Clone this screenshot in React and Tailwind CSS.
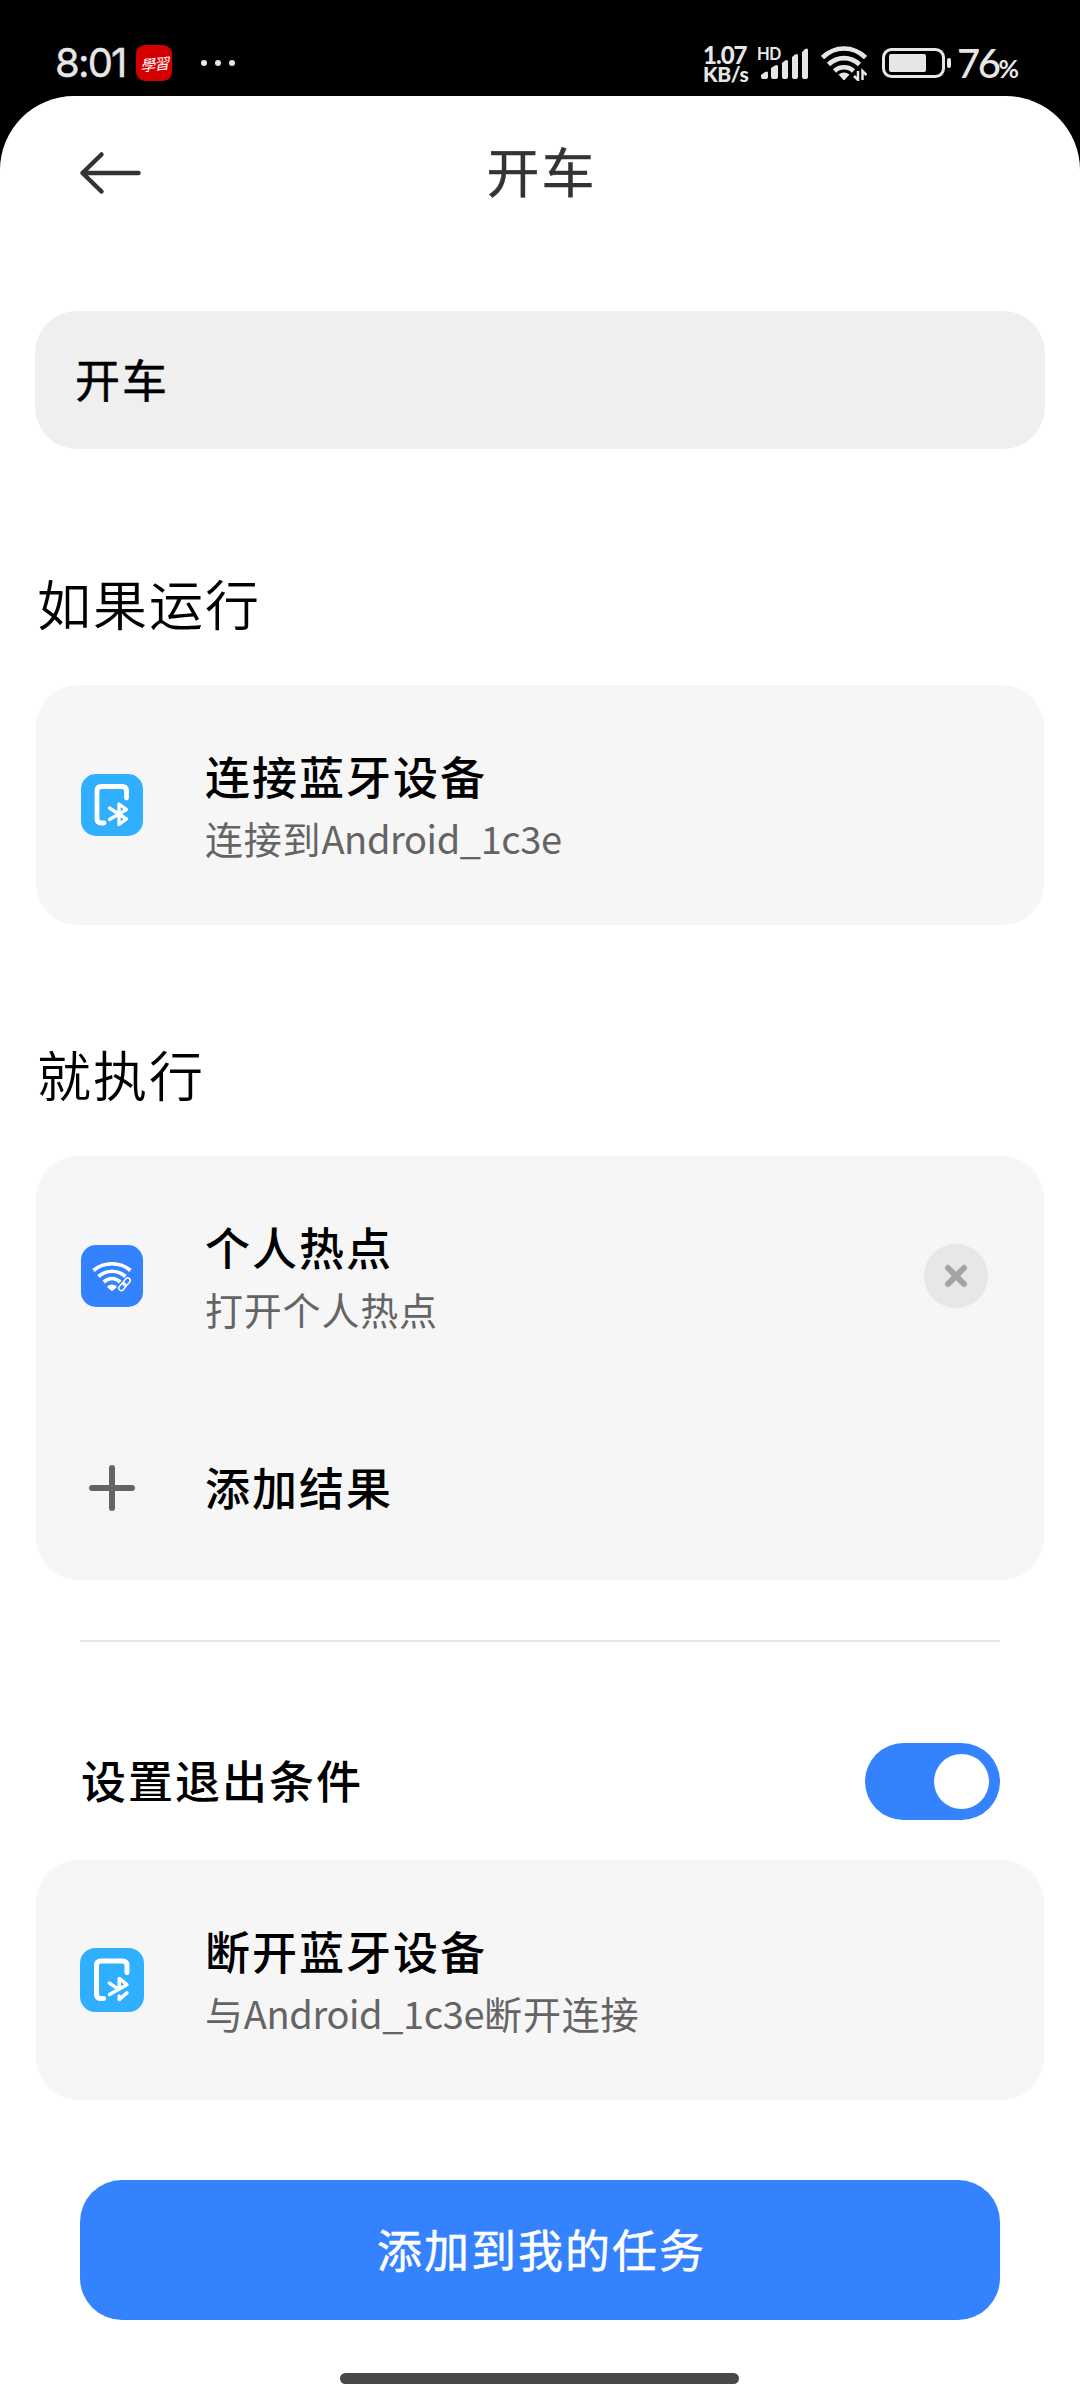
const CJK = "font-['Noto_Sans_CJK_SC',sans-serif]";

function StatusBar() {
  return (
    <header className="flex h-24 items-start bg-black text-[#e6e6e6]">
      <div className="ml-[55px] mt-[43px] flex h-10 w-[81px] items-center font-['Inter',sans-serif] text-[40px] leading-none tracking-[-1.800px] [-webkit-text-stroke:0.4px_#e6e6e6]">
        8:01
      </div>
      <div className="mt-[45px] flex size-9 items-center justify-center rounded-[9px] bg-[#d40000] text-white">
        <span className="-rotate-6 font-['Noto_Sans_CJK_TC',sans-serif] text-[15px] italic leading-none tracking-[-1px]">學習</span>
      </div>
      <div className="ml-[29px] mt-[60px] flex gap-2">
        <i className="size-1.5 rounded-full bg-[#e6e6e6]" />
        <i className="size-1.5 rounded-full bg-[#e6e6e6]" />
        <i className="size-1.5 rounded-full bg-[#e6e6e6]" />
      </div>
      <div className="ml-auto mt-[44px] flex w-[55px] flex-col whitespace-nowrap font-['Lato',sans-serif] font-black">
        <span className="text-[24px] leading-[21px] tracking-[-1px]">1.07</span>
        <span className="text-[21px] leading-[18px] tracking-[-0.400px]">KB/s</span>
      </div>
      <svg className="mt-[44px] h-9 w-[52px]" viewBox="0 0 52 36" fill="#e6e6e6">
        <text x="-1" y="16" fontFamily="Inter" fontSize="17" fontWeight="600" letterSpacing="-0.5">HD</text>
        <path d="M3 31 7 28q3-1.500 3 1v4q0 2-2 2H5q-2 0-2-2zM13 24l4-2.500q3-1.500 3 1V33q0 2-2 2h-3q-2 0-2-2zM24 19l3-2.500q3-1.500 3 1V33q0 2-2 2h-2q-2 0-2-2zM34 13l3-2.500q3-1.500 3 1V33q0 2-2 2h-2q-2 0-2-2zM44 8l3-3q3-1.500 3 1V33q0 2-2 2h-2q-2 0-2-2z" />
      </svg>
      <svg className="ml-[11px] mt-[45px] h-9 w-[46px]" viewBox="0 0 46 36" fill="none" stroke="#e6e6e6" strokeWidth="4.600">
        <path d="M1.500 12.500C14 .5 32 .5 44.500 12.500M7.500 19.500c9-8.500 22-8.500 31 0M13.500 26c5-5 14-5 19 0" />
        <path d="M17.500 29.500q5.500-4 11 0l-4.500 5q-1 1-2 0z" fill="#e6e6e6" stroke="none" />
        <path d="M37 26v9l-4-4M41.500 35v-9l4 4" strokeWidth="2.500" />
      </svg>
      <svg className="ml-[15px] mt-[48px] h-[30px] w-[70px]" viewBox="0 0 70 30" fill="#e6e6e6">
        <rect x="1.500" y="1.500" width="60" height="27" rx="8" fill="none" stroke="#e6e6e6" strokeWidth="3" />
        <rect x="7" y="6" width="37" height="18" rx="2" />
        <rect x="65" y="10" width="4" height="10" rx="2" />
      </svg>
      <div className="ml-[5px] mr-[55px] mt-[43px] flex h-10 w-[68px] items-baseline font-['Lato',sans-serif] text-[40px] font-medium leading-[40px] tracking-[-2.500px]">
        76<span className="text-[25px] font-bold tracking-normal">%</span>
      </div>
    </header>
  );
}

function BluetoothIcon({ broken }) {
  return (
    <svg className={broken ? "size-16" : "size-[62px]"} viewBox="0 0 62 62" fill="none" stroke="white" strokeLinecap="round" strokeLinejoin="round">
      <rect width="62" height="62" rx="15" fill="#30afff" stroke="none" />
      <path d="M45.500 24V17q0-4.500-4.500-4.500H20.500q-4.500 0-4.500 4.500v28q0 4 4.500 4H23" strokeWidth="4.800" />
      {broken ? (
        <path d="m28.500 34 8 5.500M28.500 45 45.500 35.500 38 29.500V39M38 46.500v3.500l7.500-6.500" strokeWidth="3.300" />
      ) : (
        <path d="m28.500 34 17 11-7.500 5.500V30l7.500 5.500-17 10" strokeWidth="3.300" />
      )}
    </svg>
  );
}

function HotspotIcon() {
  return (
    <svg className="size-[62px]" viewBox="0 0 62 62" fill="none" stroke="white">
      <rect width="62" height="62" rx="15" fill="#3582ff" stroke="none" />
      <path d="M12.500 25.500c10.500-9 26.500-9 37 0M17.500 31.500c8-7 19-7 27 0M22.800 37c5-4.500 11.400-4.500 16.400 0" strokeWidth="3.700" />
      <path d="M26.500 41q4.500-3 9 0v1.500L32 45.500q-1 .8-2 0l-3.500-3z" fill="white" stroke="none" />
      <g transform="translate(43.500 39.300) rotate(-50)" strokeWidth="1.500">
        <rect x="-9" y="-4" width="18" height="8" rx="4" fill="#3582ff" stroke="none" />
        <rect x="-7.500" y="-2.500" width="8.500" height="5" rx="2.500" />
        <rect x="-1" y="-2.500" width="8.500" height="5" rx="2.500" />
      </g>
    </svg>
  );
}

function Latin({ children }) {
  return <span className="tracking-[-0.400px]">{children}</span>;
}

function ActionRow({ icon, title, detail, children }) {
  return (
    <div className="flex h-[240px] items-center pr-14">
      <div className="ml-11 flex w-16 justify-center">{icon}</div>
      <div className="ml-[61px] flex flex-1 flex-col gap-[21px] pb-px">
        <span className="text-[45px] font-medium leading-none tracking-[2px] text-black">{title}</span>
        <span className="whitespace-nowrap text-[38px] leading-none tracking-[0.800px] text-[#646464]">{detail}</span>
      </div>
      {children}
    </div>
  );
}

function Heading({ children, className }) {
  return <h2 className={"ml-[37px] flex h-[56px] items-center text-[54px] font-[350] leading-none tracking-[2px] text-black " + className}>{children}</h2>;
}

export default function App() {
  return (
    <div className={"flex h-[2400px] w-[1080px] flex-col bg-black " + CJK}>
      <StatusBar />
      <main className="flex flex-1 flex-col rounded-t-[74px] bg-white">
        <div className="grid h-[154px] grid-cols-3 items-center">
          <svg className="ml-[79px] h-11 w-16" viewBox="0 0 64 44" fill="none" stroke="#333" strokeWidth="4.500" strokeLinecap="round" strokeLinejoin="round">
            <path d="M22.500 3.500 3.500 22l19 18.500M3.500 22h56" />
          </svg>
          <h1 className="pb-[5px] pl-[3px] text-center text-[53px] leading-none tracking-[2px] text-[#333] [-webkit-text-stroke:0.4px_#333]">开车</h1>
        </div>
        <div className="mx-[35px] mt-[61px] flex h-[138px] items-center rounded-[42px] bg-[#efefef] pb-[3px] pl-[40px] text-[45px] leading-none tracking-[2px] text-black [-webkit-text-stroke:0.5px_#000]">
          开车
        </div>

        <Heading className="mt-[126px]">如果运行</Heading>
        <section className="mx-9 mt-[54px] rounded-[42px] bg-[#f6f6f6]">
          <ActionRow icon={<BluetoothIcon />} title="连接蓝牙设备" detail={<>连接到<Latin>Android_1c3e</Latin></>} />
        </section>

        <Heading className="mt-[121px]">就执行</Heading>
        <section className="mx-9 mt-[54px] h-[424px] rounded-[42px] bg-[#f6f6f6]">
          <ActionRow icon={<HotspotIcon />} title="个人热点" detail="打开个人热点">
            <button className="flex size-16 items-center justify-center rounded-full bg-[#e7e7e7]" aria-label="删除">
              <svg className="size-6" viewBox="0 0 24 24" stroke="#a3a3a3" strokeWidth="6" strokeLinecap="round">
                <path d="m4 4 16 16M20 4 4 20" />
              </svg>
            </button>
          </ActionRow>
          <div className="flex h-[184px] items-start pt-[69px]">
            <svg className="ml-[53px] size-[46px]" viewBox="0 0 46 46" stroke="#646464" strokeWidth="6" strokeLinecap="round">
              <path d="M23 3v40M3 23h40" />
            </svg>
            <span className="ml-[70px] -mt-px text-[45px] font-medium leading-none tracking-[2px]">添加结果</span>
          </div>
        </section>

        <div className="mx-20 mt-[60px] h-0.5 bg-[#e6e6e6]" />

        <div className="mx-20 mt-[101px] flex h-[77px] items-center justify-between">
          <span className="pb-[5px] pl-px text-[45px] font-medium leading-none tracking-[2px]">设置退出条件</span>
          <div className="flex h-[77px] w-[135px] items-center justify-end rounded-full bg-[#3582ff] pr-[11px]">
            <i className="size-[55px] rounded-full bg-white" />
          </div>
        </div>
        <section className="mx-9 mt-10 rounded-[42px] bg-[#f6f6f6]">
          <ActionRow icon={<BluetoothIcon broken />} title="断开蓝牙设备" detail={<>与<Latin>Android_1c3e</Latin>断开连接</>} />
        </section>

        <button className="mx-20 mt-20 flex h-[140px] items-center justify-center rounded-[42px] bg-[#3582ff] pb-[3px] pl-[3px] text-[45px] leading-none tracking-[2px] text-white [-webkit-text-stroke:0.5px_#fff]">
          添加到我的任务
        </button>
        <div className="ml-[340px] mt-[53px] h-[11px] w-[399px] rounded-full bg-[#484848]" />
      </main>
    </div>
  );
}
